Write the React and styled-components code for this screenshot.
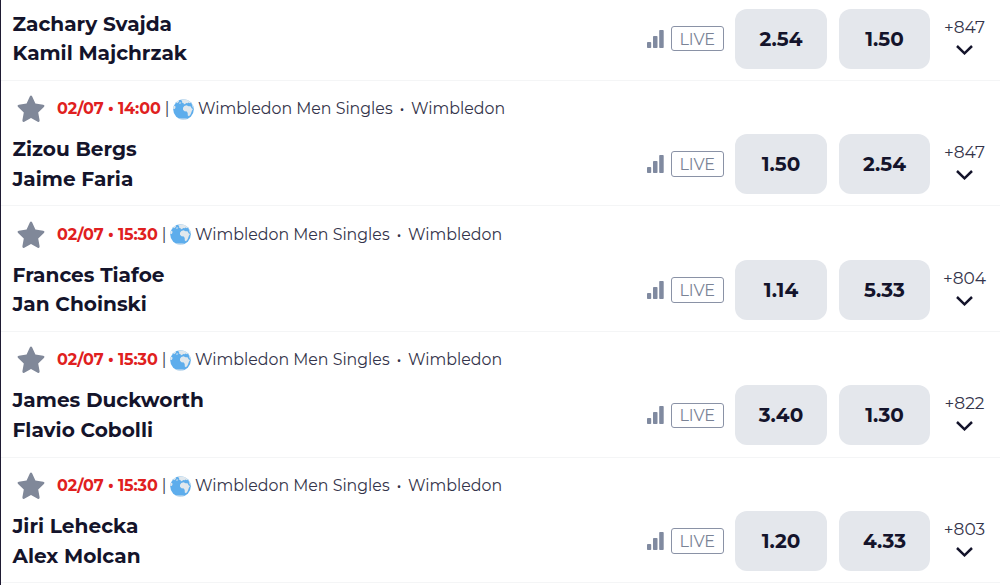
import React from 'react';
import styled, { createGlobalStyle } from 'styled-components';

const GlobalStyle = createGlobalStyle`
  * {
    box-sizing: border-box;
  }
  body {
    margin: 0;
    background: #fff;
    color: #14142b;
    font-family: Montserrat, Inter, sans-serif;
    overflow: hidden;
  }
`;

const List = styled.div`
  width: 1000px;
  height: 585px;
  overflow: hidden;
  border-left: 1px solid #1f1b33;
  background: #fff;
`;

const Row = styled.div`
  display: flex;
  flex-direction: column;
  justify-content: flex-end;
  height: ${(props) => (props.$short ? '80.7px' : '125.65px')};
  padding-bottom: 11.2px;
  border-bottom: 1px solid #f4f5f6;
`;

const Header = styled.div`
  display: flex;
  align-items: center;
  height: 50px;
  padding-left: 16px;
  font-size: 15.8px;
  font-weight: 400;
  line-height: 20px;
  white-space: nowrap;
  color: #34344a;
`;

const StarIcon = styled.svg`
  width: 28px;
  height: 28px;
  margin-right: 12px;
  fill: #808899;
`;

const DateText = styled.span`
  width: ${(props) => props.$width}px;
  color: #e02020;
  font-size: 16px;
  font-weight: 700;
  letter-spacing: -0.12px;
`;

const Bar = styled.span`
  width: 8px;
  text-align: center;
`;

const Globe = styled.svg`
  width: 21px;
  height: 21px;
  margin: 0 4px 0 2px;
`;

const League = styled.span`
  width: 195px;
`;

const Dot = styled.span`
  width: 18px;
  text-align: center;
  font-weight: 600;
`;

const Tournament = styled.span``;

const Body = styled.div`
  display: flex;
  align-items: center;
  height: 60px;
  padding-left: 11.5px;
`;

const Players = styled.div`
  flex: 1;
  padding-top: 1px;
  font-size: 20.1px;
  font-weight: 700;
  line-height: 29.5px;
`;

const Player = styled.div`
  white-space: nowrap;
`;

const StatsIcon = styled.svg`
  width: 17px;
  height: 18px;
  margin-right: 7.500px;
  fill: #808aa0;
`;

const LiveTag = styled.div`
  display: flex;
  align-items: center;
  justify-content: center;
  width: 52.5px;
  height: 25.5px;
  padding-top: 1px;
  margin-right: 11.5px;
  border: 1px solid #8a92a6;
  border-radius: 3px;
  color: #7a8396;
  font-size: 16px;
`;

const Odd = styled.button`
  width: ${(props) => props.$width}px;
  height: 60px;
  margin: 0 ${(props) => props.$gap}px 0 0;
  padding: 0;
  border: none;
  border-radius: 12px;
  background: #e4e7ec;
  color: #14142b;
  font-family: inherit;
  font-size: 20px;
  font-weight: 700;
`;

const More = styled.div`
  display: flex;
  flex-direction: column;
  align-items: center;
  width: 70px;
  height: 60px;
  padding: 8px 1px 0 0;
  color: #34344a;
  font-size: 17px;
  font-weight: 400;
  line-height: 20px;
`;

const Chevron = styled.svg`
  width: 17px;
  height: 10px;
  margin-top: 8px;
  fill: none;
  stroke: #14142b;
  stroke-width: 2.5;
`;

const matches = [
  {
    players: ['Zachary Svajda', 'Kamil Majchrzak'],
    odds: ['2.54', '1.50'],
    more: '+847',
  },
  {
    date: '02/07 • 14:00',
    dateWidth: 106,
    players: ['Zizou Bergs', 'Jaime Faria'],
    odds: ['1.50', '2.54'],
    more: '+847',
  },
  {
    date: '02/07 • 15:30',
    dateWidth: 103,
    players: ['Frances Tiafoe', 'Jan Choinski'],
    odds: ['1.14', '5.33'],
    more: '+804',
  },
  {
    date: '02/07 • 15:30',
    dateWidth: 103,
    players: ['James Duckworth', 'Flavio Cobolli'],
    odds: ['3.40', '1.30'],
    more: '+822',
  },
  {
    date: '02/07 • 15:30',
    dateWidth: 103,
    players: ['Jiri Lehecka', 'Alex Molcan'],
    odds: ['1.20', '4.33'],
    more: '+803',
  },
];

const MatchHeader = ({ match }) => (
  <Header>
    <StarIcon viewBox="0 0 28 28">
      <path d="M12.8 1.5Q14 -.3 15.2 1.5L18.4 8.6 26.2 9.7Q28.3 10.2 26.9 11.9L21.2 17.5 22.6 25.3Q22.7 27.5 20.7 26.7L14 23 7.3 26.7Q5.3 27.5 5.4 25.3L6.8 17.5 1.1 11.9Q-.3 10.2 1.8 9.7L9.6 8.6Z" />
    </StarIcon>
    <DateText $width={match.dateWidth}>{match.date}</DateText>
    <Bar>|</Bar>
    <Globe viewBox="0 0 21 21">
      <circle cx="10.5" cy="10.5" r="10.3" fill="#5dadec" />
      <path
        fill="#e1e8ed"
        d="M3.200 3.200 5 1.700 6.200 2 5.400 3.200 4 4.200ZM7.500 .700 11 .200 14.500 1 18 3.300 17 4.200 15.500 3.500 14.500 4.300 13 4 12.300 5 10.800 5.300 10.500 4 8.800 3.500 9.300 2ZM6.500 3.500 7.800 3.200 7.500 4.800 6.300 4.800ZM.600 7.500 1.800 6.500 2.600 8 2 9.700 .300 10.300ZM11.300 7 13.500 6.300 15.500 7.300 17.500 7.200 18.800 9.500 20 10 19 11.500 18.300 13.500 17.500 15.500 16 17.300 14.800 16.500 14.700 14 13.800 12.500 11.500 12.300 10 10.800 10 8.700ZM18.700 5 20 6.800 20.600 9 19.600 8.300ZM5 19.300 8 19.600 12 19.500 15 19.700 11.500 20.800 8 20.500Z"
      />
    </Globe>
    <League>Wimbledon Men Singles</League>
    <Dot>·</Dot>
    <Tournament>Wimbledon</Tournament>
  </Header>
);

const Match = ({ match }) => (
  <Row $short={!match.date}>
    {match.date && <MatchHeader match={match} />}
    <Body>
      <Players>
        {match.players.map((name) => (
          <Player key={name}>{name}</Player>
        ))}
      </Players>
      <StatsIcon viewBox="0 0 17 18">
        <rect x="0" y="12" width="4.2" height="6" rx="0.8" />
        <rect x="6" y="6" width="4.5" height="12" rx="0.8" />
        <rect x="12.2" y="0" width="4.5" height="18" rx="0.8" />
      </StatsIcon>
      <LiveTag>LIVE</LiveTag>
      <Odd $width={92} $gap={12}>{match.odds[0]}</Odd>
      <Odd $width={91} $gap={0}>{match.odds[1]}</Odd>
      <More>
        {match.more}
        <Chevron viewBox="0 0 17 10">
          <path d="M1 1 8.5 8.3 16 1" />
        </Chevron>
      </More>
    </Body>
  </Row>
);

const App = () => (
  <>
    <GlobalStyle />
    <List>
      {matches.map((match, index) => (
        <Match key={index} match={match} />
      ))}
    </List>
  </>
);

export default App;
